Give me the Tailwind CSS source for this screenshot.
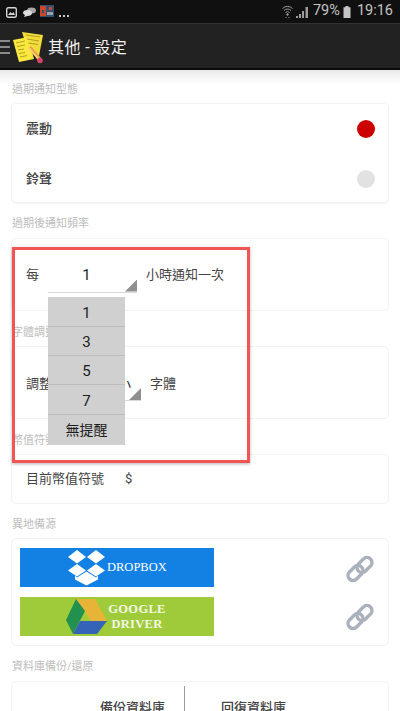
<!DOCTYPE html>
<html>
<head>
  <meta charset="utf-8">
  <title>設定</title>
  <script src="https://cdn.jsdelivr.net/npm/@tailwindcss/browser@4"></script>
</head>
<body class="bg-white font-['Roboto','Noto_Sans_CJK_TC',sans-serif]">
  <div class="relative w-[400px] h-[711px] overflow-hidden bg-white">

    <!-- status bar -->
    <div class="h-[23px] bg-[#101010] flex items-center pl-[6px] pr-[7px] text-[#c4c4c4]">
      <svg width="11" height="11" viewBox="0 0 11 11" fill="none" class="mt-px"><rect x="0.700" y="0.700" width="9.600" height="9.600" rx="1.500" stroke="#d4d4d4" stroke-width="1.400"/><path d="M2 8l2.500-3 1.500 1.500 1.500-1.500L9 8z" fill="#d4d4d4"/></svg>
      <svg width="13" height="10" viewBox="0 0 13 10" class="ml-[6px] mt-px"><ellipse cx="8.500" cy="3.500" rx="4.500" ry="3" fill="#a8a8a8"/><path d="M4.500 3C7 3 9 4.200 9 6S7 9 4.500 9L1 10l1-2C.8 7.400 0 6.800 0 6c0-1.800 2-3 4.500-3z" fill="#dcdcdc"/></svg>
      <svg width="14" height="12" viewBox="0 0 14 12" class="ml-[4px] mb-[1px]"><rect width="14" height="12" fill="#34506e"/><rect y="1" width="6" height="10" fill="#c9482c"/><rect x="2" y="5" width="2" height="3" fill="#34506e"/><rect x="7" y="7" width="6" height="3" fill="#9aa2a8"/><rect x="9" y="2" width="3" height="3" fill="#c9482c"/></svg>
      <div class="ml-[5px] flex gap-[2px] mt-[8px]">
        <span class="w-[2px] h-[2px] bg-[#c4c4c4]"></span>
        <span class="w-[2px] h-[2px] bg-[#c4c4c4]"></span>
        <span class="w-[2px] h-[2px] bg-[#c4c4c4]"></span>
      </div>
      <div class="ml-auto flex items-center">
        <svg width="11" height="13" viewBox="0 0 11 13" fill="none" stroke="#9c9c9c" stroke-width="1"><path d="M0.500 3.500a7 7 0 0 1 10 0M2 5.500a5 5 0 0 1 7 0M3.500 7.500a3 3 0 0 1 4 0"/><circle cx="5.500" cy="9.500" r="0.800" fill="#9c9c9c"/><path d="M3.500 12.500h1M6.500 12.500h1"/></svg>
        <svg width="12" height="12" viewBox="0 0 12 12" class="ml-[3px] mt-px" fill="#9c9c9c"><rect x="0" y="10" width="2" height="2"/><rect x="3" y="8" width="2" height="4"/><rect x="6" y="5" width="2" height="7"/><rect x="9.500" y="1" width="2.500" height="11"/></svg>
        <span class="ml-[5px] text-[14.500px] leading-none">79%</span>
        <svg width="8" height="12" viewBox="0 0 8 12" class="ml-[3px] mt-px"><rect x="2.500" y="0" width="3" height="2" fill="#c4c4c4"/><rect x="0.500" y="1.200" width="7" height="10.800" fill="#c4c4c4"/></svg>
        <span class="ml-[6px] text-[14.500px] leading-none">19:16</span>
      </div>
    </div>

    <!-- app bar -->
    <div class="h-[47px] bg-[#222222] border-t border-t-[#333333] border-b-[2px] border-b-[#0c0c0c] flex items-center relative">
      <div class="w-[10px] flex flex-col gap-[4px] mt-[1px]">
        <div class="h-[2px] bg-[#8a8a8a]"></div>
        <div class="h-[2px] bg-[#8a8a8a]"></div>
        <div class="h-[2px] bg-[#8a8a8a]"></div>
      </div>
      <svg width="31" height="33" viewBox="0 0 31 33" class="ml-[3px] mt-[2px]">
        <path d="M9 1l21 3-4 21-11-5z" fill="#f2dc3a"/>
        <path d="M0 9l15-3 6 22-15 3z" fill="#fbe83f"/>
        <path d="M13 4l14 2M14 8l12 2M15 12l10 1.500M3 12l9-2M4 15.500l8-1.500M5 19l6-1M6 22.500l6-1M7 26l7-1.500" stroke="#8f8120" stroke-width="0.700"/>
        <path d="M15 17l3-2 10 12-3 2z" fill="#e9a23c"/>
        <path d="M15 17l1.500-1 10 12-1.500 1z" fill="#f6d27a"/>
        <circle cx="27" cy="29.500" r="2.800" fill="#d8456a"/>
      </svg>
      <span class="ml-[4px] mt-[3px] text-[16px] text-[#f0f0f0] tracking-[0.4px]">其他 - 設定</span>
    </div>

    <!-- content -->
    <div class="h-[641px] overflow-hidden bg-gradient-to-b from-[#e9e9e9] to-white to-[14px] bg-no-repeat bg-[length:100%_14px] px-[11px]">
      <p class="pt-[12px] h-[33px] pl-px text-[11px] leading-[16px] text-[#bdbdbd]">過期通知型態</p>
      <div class="h-[100px] rounded-[5px] border border-[#f2f2f2] shadow-[0_1px_1px_rgba(0,0,0,0.05)] pl-[14px] pr-[13px] flex flex-col text-[13px] text-[#444444] font-medium">
        <div class="h-[50px] flex items-center justify-between"><span>震動</span><span class="w-[18px] h-[18px] rounded-full bg-[#cc0000]"></span></div>
        <div class="h-[48px] pt-px flex items-center justify-between"><span>鈴聲</span><span class="w-[18px] h-[18px] rounded-full bg-[#e2e2e2]"></span></div>
      </div>

      <p class="pt-[13px] h-[35px] pl-px text-[11px] leading-[16px] text-[#bdbdbd]">過期後通知頻率</p>
      <div class="h-[73px] rounded-[5px] border border-[#f2f2f2] pl-[14px] flex items-center text-[13px] text-[#444444]">
        <span class="w-[22px]">每</span>
        <div class="relative w-[89px] h-[34px] mt-[2px] border-b border-[#d8d8d8] text-center">
          <span class="block w-[77px] text-[15px] leading-[32px] text-[#222222]">1</span>
          <span class="absolute right-0 bottom-0 w-[12px] h-[12px] bg-[#8f8f8f] [clip-path:polygon(100%_0,100%_100%,0_100%)]"></span>
        </div>
        <span class="ml-[9px]">小時通知一次</span>
      </div>

      <p class="pt-[14px] h-[35px] pl-px text-[11px] leading-[16px] text-[#bdbdbd]">字體調整</p>
      <div class="h-[73px] rounded-[5px] border border-[#f2f2f2] pl-[14px] flex items-center text-[13px] text-[#444444]">
        <span class="w-[64px] mt-[2px]">調整</span>
        <div class="relative w-[51px] h-[34px] mt-[3px] border-b border-[#d8d8d8] text-right">
          <span class="block pr-[10px] text-[14px] leading-[34px] text-[#333333]">小</span>
          <span class="absolute right-0 bottom-0 w-[12px] h-[12px] bg-[#8f8f8f] [clip-path:polygon(100%_0,100%_100%,0_100%)]"></span>
        </div>
        <span class="ml-[9px] mt-[2px]">字體</span>
      </div>

      <p class="pt-[14px] h-[35px] pl-px text-[11px] leading-[16px] text-[#bdbdbd]">幣值符號</p>
      <div class="h-[50px] rounded-[5px] border border-[#f2f2f2] pl-[14px] flex items-center text-[13px] text-[#444444]">
        <span class="w-[99px]">目前幣值符號</span><span>$</span>
      </div>

      <p class="pt-[13px] h-[34px] pl-px text-[11px] leading-[16px] text-[#bdbdbd]">異地備源</p>
      <div class="h-[108px] rounded-[5px] border border-[#f2f2f2] pl-[8px] pr-[14px] flex items-center justify-between">
        <div class="flex flex-col gap-[10px]">
          <div class="w-[194px] h-[39px] bg-[#1380e3] flex items-center pl-[47px] gap-[1px]">
            <svg width="39" height="37" viewBox="0 0 39 37" fill="#ffffff">
              <path d="M10 1l9 7-9 6.500L1 8z"/><path d="M29 1l9 7-9 6.500L20 8z"/>
              <path d="M10 15l9 6.500-9 6-9-6z"/><path d="M29 15l9 6.500-9 6-9-6z"/>
              <path d="M8 26.500l2 2 9.500-6 9.500 6 2-2v4l-11.500 6-11.500-6z"/>
            </svg>
            <span class="font-['Liberation_Serif',serif] text-[12.500px] text-white">DROPBOX</span>
          </div>
          <div class="w-[194px] h-[39px] bg-[#9fcb3b] flex items-center pl-[46px]">
            <svg width="42" height="36" viewBox="0 0 42 36">
              <path d="M10 0h19l12 22H25z" fill="#e8b438"/>
              <path d="M10 0L0 21l7 14L19 12z" fill="#23914e"/>
              <path d="M14 22h27l-10 13H7z" fill="#3563b5"/>
            </svg>
            <span class="w-[58px] font-['Liberation_Serif',serif] font-bold text-[12.500px] leading-[15px] text-[#f4f8e4] text-center tracking-[0.3px]">GOOGLE DRIVER</span>
          </div>
        </div>
        <div class="flex flex-col gap-[20px] mt-[2px]">
          <svg width="28" height="28" viewBox="0 0 28 28" fill="none" stroke="#aab1bc" stroke-width="3.400"><rect x="10" y="5" width="17" height="10" rx="5" transform="rotate(-45 18.500 10)"/><rect x="1" y="13" width="17" height="10" rx="5" transform="rotate(-45 9.500 18)"/></svg>
          <svg width="28" height="28" viewBox="0 0 28 28" fill="none" stroke="#aab1bc" stroke-width="3.400"><rect x="10" y="5" width="17" height="10" rx="5" transform="rotate(-45 18.500 10)"/><rect x="1" y="13" width="17" height="10" rx="5" transform="rotate(-45 9.500 18)"/></svg>
        </div>
      </div>

      <p class="pt-[13px] h-[35px] pl-px text-[11px] leading-[16px] text-[#bdbdbd]">資料庫備份/還原</p>
      <div class="h-[60px] rounded-[5px] border border-[#f2f2f2] flex pt-[4px] text-[13px] font-medium text-[#444444]">
        <div class="w-[173px] pr-[19px] pt-[12px] text-right border-r border-[#9a9a9a] h-[60px]">備份資料庫</div>
        <div class="pl-[36px] pt-[12px]">回復資料庫</div>
      </div>
    </div>

    <!-- open dropdown -->
    <div class="absolute left-[48px] top-[297px] w-[77px] h-[148px] bg-[#d0d0d0] flex flex-col text-center text-[15px] text-[#1c1c1c]">
      <div class="h-[30px] pt-[2px] leading-[28px] border-b border-[#bdbdbd]">1</div>
      <div class="h-[29px] pt-[2px] leading-[27px] border-b border-[#bdbdbd]">3</div>
      <div class="h-[29px] pt-[2px] leading-[27px] border-b border-[#bdbdbd]">5</div>
      <div class="h-[30px] pt-[2px] leading-[28px] border-b border-[#bdbdbd]">7</div>
      <div class="h-[30px] leading-[30px] text-[14px]">無提醒</div>
    </div>

    <!-- highlight box -->
    <div class="absolute left-[12px] top-[247px] w-[238px] h-[216px] border-[3px] border-[#f25555] shadow-[0_1px_3px_rgba(0,0,0,0.3)]"></div>
  </div>
</body>
</html>
